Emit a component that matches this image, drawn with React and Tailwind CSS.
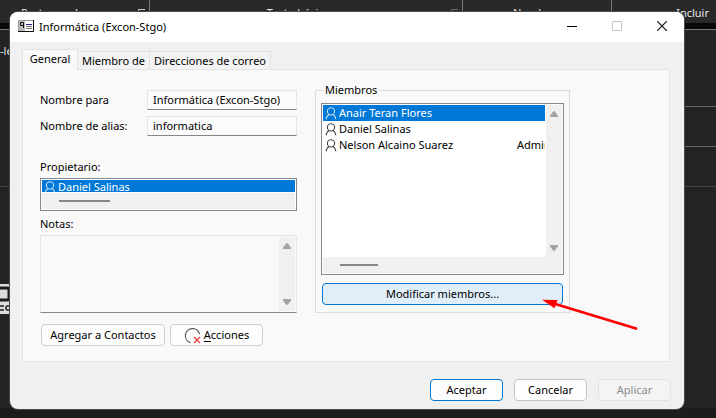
import React from "react";

function Person({ className }) {
  return (
    <svg viewBox="0 0 12 13" className={"h-[13px] w-3 shrink-0 " + className} fill="none" stroke="currentColor" strokeWidth="1.1" aria-hidden="true">
      <circle cx="6" cy="4.4" r="3.6" />
      <path d="M1.2 12.2C1.4 9.6 2.6 8.1 4.3 7.4M10.8 12.2C10.6 9.6 9.4 8.1 7.7 7.4" />
    </svg>
  );
}

function ScrollArrows() {
  return (
    <div className="flex w-4 shrink-0 flex-col items-center justify-between bg-[#f0f0f0] py-1.5 text-[#a3a3a3]" aria-hidden="true">
      <svg viewBox="0 0 8 6" className="h-1.5 w-2" fill="currentColor"><path d="M3.2 .3h1.6L8 4.8V6H0V4.8Z" /></svg>
      <svg viewBox="0 0 8 6" className="h-1.5 w-2" fill="currentColor"><path d="M3.2 5.7h1.6L8 1.2V0H0v1.2Z" /></svg>
    </div>
  );
}

function Field({ id, label, value }) {
  return (
    <div className="flex h-5 items-center">
      <label htmlFor={id} className="w-[107px] shrink-0">{label}</label>
      <input id={id} readOnly defaultValue={value} className="h-5 min-w-0 flex-1 border border-[#e5e5e5] border-b-[#868686] bg-[#fbfbfb] px-[5px] pb-0.5 outline-none" />
    </div>
  );
}

function Member({ name, detail, selected }) {
  return (
    <li role="option" aria-selected={!!selected} className={"flex h-4 items-center overflow-hidden whitespace-nowrap pl-0.5 " + (selected ? "bg-[#0078d7] text-white" : "")}>
      <Person className={selected ? "text-[#c5e2f8]" : "text-[#444]"} />
      <span className="ml-0.5 w-[178px] shrink-0">{name}</span>
      <span>{detail}</span>
    </li>
  );
}

function GroupLauncher({ className }) {
  return (
    <svg viewBox="0 0 7 7" className={"mt-[9px] size-[7px] " + className} fill="none" stroke="currentColor" aria-hidden="true">
      <path d="M.5 7V.5H7M2.5 3.5h4" />
    </svg>
  );
}

function Backdrop() {
  return (
    <div className="flex min-h-screen flex-col bg-[#232323] text-[#e8e8e8]">
      <div className="flex h-[23px] bg-[#292929] text-center leading-[26px]">
        <div className="flex w-[150px] justify-between border-r border-[#777] pl-[21px] pr-1">
          <span>Portapapeles</span>
          <GroupLauncher className="text-[#ccc]" />
        </div>
        <div className="flex w-[313px] border-r border-[#777] pr-1">
          <span className="flex-1 pr-1">Texto básico</span>
          <GroupLauncher className="text-[#666]" />
        </div>
        <div className="w-[149px] border-r border-[#777]">Nombres</div>
        <div className="flex-1 pr-[7px] text-right">Incluir</div>
      </div>
      <div className="h-1.5 bg-[#080808]" />
      <div className="flex flex-1 justify-between border-t border-[#777]">
        <div className="w-2.5 overflow-hidden whitespace-nowrap">
          <div className="h-[157px] border-b border-[#444] pt-[13px]">-le</div>
          <svg viewBox="0 0 10 30" className="mt-[97px] h-[30px] w-2.5" aria-hidden="true">
            <path fill="#dcdcdc" d="M0 0h10v30H0z" />
            <path d="M0 4h7q2 0 2 2v8q0 2-2 2H0" fill="none" stroke="#1c1c1c" strokeWidth="3" />
            <path d="M0 22h4M0 26h4M10 22H7q-1 0-1 2t1 2h3" fill="none" stroke="#1c1c1c" strokeWidth="1.6" />
          </svg>
        </div>
        <div className="w-8">
          <div className="h-[77px] border-b border-[#666]" />
          <div className="h-10 border-b border-[#666]" />
          <div className="h-10 border-b border-[#444]" />
        </div>
      </div>
      <div className="h-2.5 bg-[#1c1c1c]" />
    </div>
  );
}

const button = "h-[22px] rounded border text-center ";

export default function App() {
  return (
    <div className="relative min-h-screen overflow-hidden font-['Noto_Sans',sans-serif] text-[11px] leading-4 text-black">
      <Backdrop />
      <main role="dialog" aria-labelledby="title" className="absolute left-2.5 right-8 top-3 overflow-hidden rounded-lg bg-[#f0f0f0] pb-2 shadow-[0_0_0_1px_#4a4a4a]">
        <header className="flex h-[30px] items-center bg-white pl-2">
          <svg viewBox="0 0 16 12" className="mb-0.5 h-3 w-4" aria-hidden="true">
            <path fill="#fff" stroke="#999" d="M.5.5h15v11H.5z" />
            <path fill="#bbb" d="M1 1h6v10H1z" />
            <path d="M0 11.5h15.5V0" fill="none" stroke="#111" />
            <path d="M5.5 8V2.5h-3v3h3" fill="none" stroke="#111" />
            <path stroke="#22228a" d="M8 4.5h6" />
            <path stroke="#777" d="M8 6.5h6M8 8.5h6" />
          </svg>
          <h1 id="title" className="ml-[5px] flex-1">Informática (Excon-Stgo)</h1>
          <div className="flex items-center pb-0.5 pr-[17px]">
            <button aria-label="Minimizar" className="mr-[35px]"><svg viewBox="0 0 10 10" className="block size-2.5"><path d="M0 5.5h10" stroke="#000" /></svg></button>
            <button aria-label="Maximizar" disabled className="mr-[35px]"><svg viewBox="0 0 10 10" className="block size-2.5"><rect x=".5" y=".5" width="9" height="9" rx=".5" fill="none" stroke="#c4c4c4" /></svg></button>
            <button aria-label="Cerrar"><svg viewBox="0 0 10 10" className="block size-2.5"><path d="M0 0l10 10M10 0L0 10" stroke="#111" strokeWidth="1.2" /></svg></button>
          </div>
        </header>

        <div className="pl-3 pr-3.5 pt-[7px]">
          <div role="tablist" className="flex h-5 items-end">
            <button role="tab" aria-selected="true" className="z-10 -mb-px h-[21px] w-14 border border-b-0 border-[#e3e3e3] bg-[#f9f9f9] pb-0.5">General</button>
            <button role="tab" aria-selected="false" className="h-[18px] w-[72px] border border-b-0 border-l-0 border-[#e3e3e3] bg-[#f3f3f3]">Miembro de</button>
            <button role="tab" aria-selected="false" className="h-[18px] w-[121px] border border-b-0 border-l-0 border-[#e3e3e3] bg-[#f3f3f3]">Direcciones de correo</button>
          </div>

          <section role="tabpanel" className="flex gap-[18px] border border-[#e3e3e3] bg-[#f9f9f9] pb-[15px] pl-[17px] pt-5">
            <div className="w-[257px] shrink-0">
              <div className="flex flex-col gap-1.5">
                <Field id="name" label="Nombre para" value="Informática (Excon-Stgo)" />
                <Field id="alias" label="Nombre de alias:" value="informatica" />
              </div>

              <h2 id="owner" className="mt-[23px]">Propietario:</h2>
              <div className="mt-[3px] border border-[#828790] bg-white p-px">
                <ul role="listbox" aria-labelledby="owner">
                  <li role="option" aria-selected="true" className="flex h-3 items-start overflow-hidden bg-[#0078d7] pl-0.5 leading-[14px] text-white">
                    <Person className="mt-px text-[#c5e2f8]" /><span className="ml-0.5">Daniel Salinas</span>
                  </li>
                </ul>
                <div className="mt-px flex h-4 items-center bg-[#f0f0f0] pl-[17px]"><div className="h-0.5 w-[51px] bg-[#868686]" /></div>
              </div>

              <label htmlFor="notes" className="mt-[5px] block">Notas:</label>
              <div className="mt-[3px] flex h-[78px] border border-[#e5e5e5] border-b-[#868686] p-px">
                <textarea id="notes" readOnly className="min-w-0 flex-1 resize-none bg-transparent outline-none" />
                <ScrollArrows />
              </div>

              <div className="mt-[11px] flex gap-[5px] pl-px">
                <button className={button + "w-[124px] border-[#cfcfcf] bg-[#fdfdfd]"}>Agregar a Contactos</button>
                <button className={button + "flex w-[93px] items-center justify-center border-[#cfcfcf] bg-[#fdfdfd]"}>
                  <svg viewBox="0 0 17 17" className="mr-[3px] size-[17px]" fill="none" aria-hidden="true">
                    <path d="M6.5 15.7A7.2 7.2 0 1 1 15.6 7.2" stroke="#555" strokeWidth="1.2" />
                    <path d="M10 10l6 6M16 10l-6 6" stroke="#e34444" strokeWidth="1.4" />
                  </svg>
                  <span><u className="underline-offset-2">A</u>cciones</span>
                </button>
              </div>
            </div>

            <div className="w-[255px]">
              <fieldset className="-mt-2 min-w-0 border border-[#dcdcdc] px-[5px] pb-[7px]">
                <legend className="ml-0.5 px-[2px]">Miembros</legend>
                <div className="mb-2 mt-[5px] border border-[#828790] bg-white p-px">
                  <div className="flex h-[152px]">
                    <ul role="listbox" aria-label="Miembros" className="mr-px min-w-0 flex-1 overflow-hidden">
                      <Member name="Anair Teran Flores" selected />
                      <Member name="Daniel Salinas" />
                      <Member name="Nelson Alcaino Suarez" detail="Admin" />
                    </ul>
                    <ScrollArrows />
                  </div>
                  <div className="flex h-4 items-center bg-[#f0f0f0] pl-[17px]"><div className="h-0.5 w-[38px] bg-[#868686]" /></div>
                </div>
                <button className={button + "mx-px block w-[241px] border-[#0078d4] bg-[#e0eef9]"}>Modificar miembros...</button>
              </fieldset>
            </div>
          </section>
        </div>

        <footer className="mt-[17px] flex justify-end gap-[11px] pr-[13px]">
          <button className={button + "w-[73px] border-[#0078d4] bg-[#fdfdfd]"}>Aceptar</button>
          <button className={button + "w-[73px] border-[#c4c4c4] bg-[#fdfdfd]"}>Cancelar</button>
          <button disabled className={button + "w-[73px] border-[#e2e2e2] bg-[#f4f4f4] text-[#8a8a8a]"}>Aplicar</button>
        </footer>
      </main>

      <svg viewBox="0 0 96 31" className="pointer-events-none absolute left-[542px] top-[299px] h-[31px] w-24" aria-hidden="true">
        <path d="M10 4L94 29.5" stroke="#ff0000" strokeWidth="2.8" strokeLinecap="round" />
        <path d="M0 .8L15.5 1l-3 8.2Z" fill="#ff0000" />
      </svg>
    </div>
  );
}
